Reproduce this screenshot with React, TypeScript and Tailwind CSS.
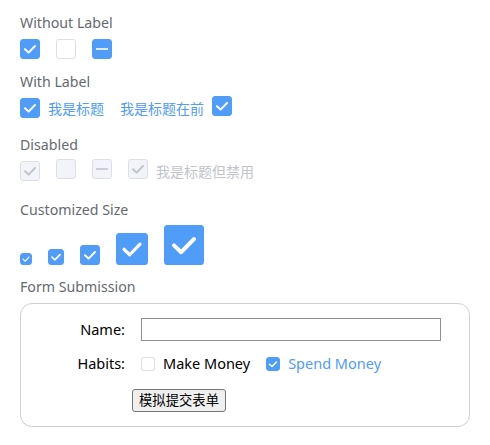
import React from "react"

const BLUE = "#4f9cf9"

type BoxProps = {
  size?: number
  state: "checked" | "empty" | "half"
  disabled?: boolean
}

function Box({ size = 20, state, disabled = false }: BoxProps) {
  const filled = !disabled && state !== "empty"
  const bg = filled ? BLUE : disabled ? "#f2f4f9" : "#ffffff"
  const border = filled ? BLUE : "#dcdfe6"
  const mark = disabled ? "#c0c4cc" : "#ffffff"
  return (
    <span
      className="inline-flex shrink-0 items-center justify-center rounded-[3px] border"
      style={{ width: size, height: size, background: bg, borderColor: border }}
    >
      {state === "checked" && (
        <svg viewBox="0 0 20 20" width={size} height={size} className="shrink-0">
          <path d="M5 10.2 L8.6 13.6 L15 7" fill="none" stroke={mark} strokeWidth="2" strokeLinecap="round" strokeLinejoin="round" />
        </svg>
      )}
      {state === "half" && (
        <svg viewBox="0 0 20 20" width={size} height={size} className="shrink-0">
          <rect x="4" y="9.2" width="12" height="1.6" fill={mark} />
        </svg>
      )}
    </span>
  )
}

function Title({ children, className = "" }: { children: React.ReactNode; className?: string }) {
  return <div className={`text-[14.2px] leading-[20px] text-[#666a70] ${className}`}>{children}</div>
}

export default function App() {
  return (
    <div
      className="min-h-screen bg-white px-5 pt-[13px]"
      style={{ fontFamily: '"Noto Sans", "Noto Sans CJK SC", sans-serif' }}
    >
      {/* Without label */}
      <Title>Without Label</Title>
      <div className="mt-[6px] flex items-center gap-4">
        <Box state="checked" />
        <Box state="empty" />
        <Box state="half" />
      </div>

      {/* With label */}
      <Title className="mt-[13px]">With Label</Title>
      <div className="mt-[6px] flex h-5 items-center text-[14px] text-[#4f9cf9]">
        <Box state="checked" />
        <span className="ml-2">我是标题</span>
        <span className="ml-4">我是标题在前</span>
        <span className="ml-2"><Box state="checked" /></span>
      </div>

      {/* Disabled */}
      <Title className="mt-[17px]">Disabled</Title>
      <div className="mt-[6px] flex h-5 items-center text-[14px] text-[#c0c4cc]">
        <Box state="checked" disabled />
        <span className="ml-4"><Box state="empty" disabled /></span>
        <span className="ml-4"><Box state="half" disabled /></span>
        <span className="ml-4"><Box state="checked" disabled /></span>
        <span className="ml-2">我是标题但禁用</span>
      </div>

      {/* Customized size */}
      <Title className="mt-[19px]">Customized Size</Title>
      <div className="mt-[5px] flex items-end gap-4">
        <Box size={12} state="checked" />
        <Box size={16} state="checked" />
        <Box size={20} state="checked" />
        <Box size={32} state="checked" />
        <Box size={40} state="checked" />
      </div>

      {/* Form */}
      <Title className="mt-[12px]">Form Submission</Title>
      <div className="mt-[6px] flex h-[124px] flex-col rounded-[12px] border border-[#d0d0d0] pt-[14px]">
        <div className="flex items-center">
          <span className="w-[104px] text-right text-[14.5px] text-black">Name:</span>
          <input className="ml-4 h-[23px] w-[300px] border border-[#8f8f8f] bg-white px-1 text-[13px] outline-none" />
        </div>
        <div className="mt-[12px] flex items-center text-[14.5px]">
          <span className="w-[104px] text-right text-black">Habits:</span>
          <span className="ml-4 flex items-center">
            <Box size={14} state="empty" />
            <span className="ml-2 text-black">Make Money</span>
          </span>
          <span className="ml-4 flex items-center">
            <Box size={14} state="checked" />
            <span className="ml-2 text-[#4f9cf9]">Spend Money</span>
          </span>
        </div>
        <div className="mt-[12px] pl-[111px]">
          <button className="h-[23px] rounded-[3px] border border-[#767676] bg-[#efefef] px-[6px] text-[13.33px] leading-none text-black">
            模拟提交表单
          </button>
        </div>
      </div>
    </div>
  )
}
